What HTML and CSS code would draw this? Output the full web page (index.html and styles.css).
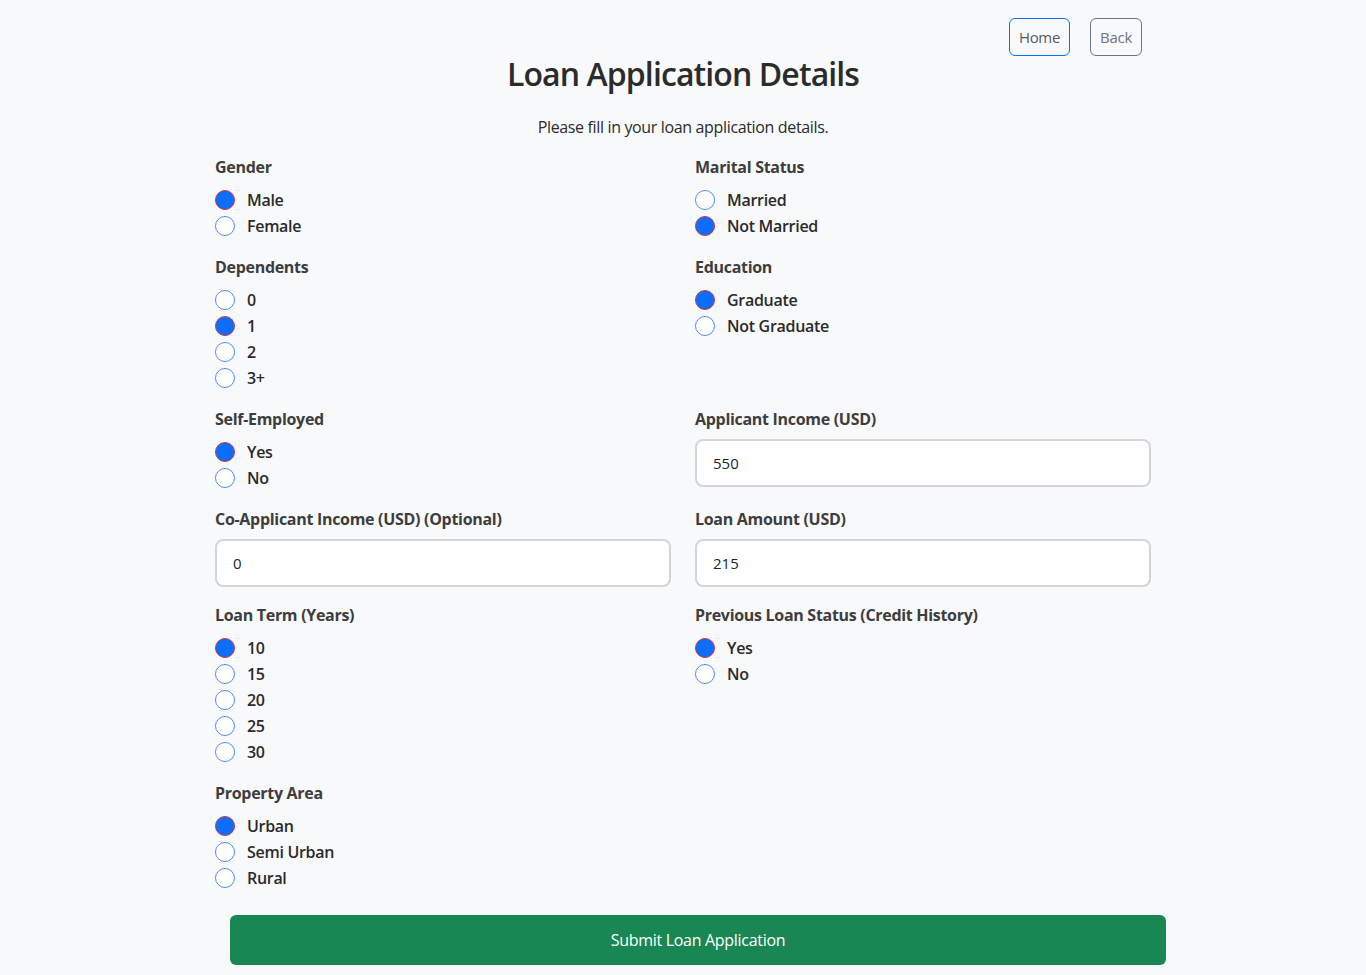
FILE: index.html
```html
<!DOCTYPE html>
<html lang="en">
<head>
<meta charset="utf-8">
<title>Loan Application Details</title>
<link rel="stylesheet" href="styles.css">
</head>
<body>
<div class="container">
  <header class="page-header">
    <nav class="top-nav">
      <a class="btn btn-home" href="#">Home</a>
      <a class="btn btn-back" href="#">Back</a>
    </nav>
    <h1 class="title">Loan Application Details</h1>
    <p class="subtitle">Please fill in your loan application details.</p>
  </header>

  <form class="loan-form">
    <div class="grid">
      <div class="field">
        <div class="field-label">Gender</div>
        <label class="check"><input type="radio" name="gender" checked><span>Male</span></label>
        <label class="check"><input type="radio" name="gender"><span>Female</span></label>
      </div>
      <div class="field">
        <div class="field-label">Marital Status</div>
        <label class="check"><input type="radio" name="married"><span>Married</span></label>
        <label class="check"><input type="radio" name="married" checked><span>Not Married</span></label>
      </div>

      <div class="field">
        <div class="field-label">Dependents</div>
        <label class="check"><input type="radio" name="dep"><span>0</span></label>
        <label class="check"><input type="radio" name="dep" checked><span>1</span></label>
        <label class="check"><input type="radio" name="dep"><span>2</span></label>
        <label class="check"><input type="radio" name="dep"><span>3+</span></label>
      </div>
      <div class="field">
        <div class="field-label">Education</div>
        <label class="check"><input type="radio" name="edu" checked><span>Graduate</span></label>
        <label class="check"><input type="radio" name="edu"><span>Not Graduate</span></label>
      </div>

      <div class="field">
        <div class="field-label">Self-Employed</div>
        <label class="check"><input type="radio" name="self" checked><span>Yes</span></label>
        <label class="check"><input type="radio" name="self"><span>No</span></label>
      </div>
      <div class="field">
        <label class="field-label" for="income">Applicant Income (USD)</label>
        <input class="text-input" id="income" type="text" value="550">
      </div>

      <div class="field">
        <label class="field-label" for="coincome">Co-Applicant Income (USD) (Optional)</label>
        <input class="text-input" id="coincome" type="text" value="0">
      </div>
      <div class="field">
        <label class="field-label" for="amount">Loan Amount (USD)</label>
        <input class="text-input" id="amount" type="text" value="215">
      </div>

      <div class="field">
        <div class="field-label">Loan Term (Years)</div>
        <label class="check"><input type="radio" name="term" checked><span>10</span></label>
        <label class="check"><input type="radio" name="term"><span>15</span></label>
        <label class="check"><input type="radio" name="term"><span>20</span></label>
        <label class="check"><input type="radio" name="term"><span>25</span></label>
        <label class="check"><input type="radio" name="term"><span>30</span></label>
      </div>
      <div class="field">
        <div class="field-label">Previous Loan Status (Credit History)</div>
        <label class="check"><input type="radio" name="credit" checked><span>Yes</span></label>
        <label class="check"><input type="radio" name="credit"><span>No</span></label>
      </div>

      <div class="field">
        <div class="field-label">Property Area</div>
        <label class="check"><input type="radio" name="area" checked><span>Urban</span></label>
        <label class="check"><input type="radio" name="area"><span>Semi Urban</span></label>
        <label class="check"><input type="radio" name="area"><span>Rural</span></label>
      </div>
    </div>

    <button class="submit" type="button">Submit Loan Application</button>
  </form>
</div>
</body>
</html>
```

FILE: styles.css
```css
* { box-sizing: border-box; }

html, body {
  margin: 0;
  padding: 0;
  background: #f8f9fa;
}

body {
  font-family: "Open Sans", "Noto Sans", "Liberation Sans", sans-serif;
  color: #212529;
  font-size: 16px;
  line-height: 24px;
  letter-spacing: -0.3px;
}

.container {
  max-width: 960px;
  margin: 0 auto;
  padding: 0 12px;
}

.page-header {
  position: relative;
  padding-top: 54px;
  text-align: center;
}

.top-nav {
  position: absolute;
  top: 18px;
  right: 9px;
  display: flex;
  gap: 20px;
}

.btn {
  display: inline-block;
  height: 38px;
  padding: 0 9px;
  line-height: 36px;
  font-size: 15px;
  border-radius: 6px;
  text-decoration: none;
  background: transparent;
  color: #555b61;
}

.btn-home { border: 1px solid #0d6efd; }
.btn-back { border: 1px solid #6c757d; color: #6c757d; }

.title {
  margin: 0;
  font-size: 32px;
  line-height: 40px;
  font-weight: 600;
  color: #2b2b2b;
  letter-spacing: -0.9px;
}

.subtitle {
  margin: 21px 0 0;
  font-size: 16px;
  line-height: 24px;
  color: #2b2b2b;
  letter-spacing: -0.35px;
}

.loan-form {
  margin-top: 16px;
}

.grid {
  display: grid;
  grid-template-columns: 1fr 1fr;
  column-gap: 24px;
}

.field {
  display: flex;
  flex-direction: column;
  align-items: flex-start;
  margin-bottom: 16px;
}

.field-label {
  display: block;
  font-weight: 700;
  font-size: 16px;
  line-height: 24px;
  color: #3d3d3d;
  margin-bottom: 8px;
}

.check {
  display: flex;
  align-items: center;
  gap: 12px;
  height: 24px;
  margin: 1px 0;
  font-size: 16px;
  font-weight: 600;
  color: #2a2a2a;
}

.check input {
  -webkit-appearance: none;
  appearance: none;
  margin: 0;
  width: 20px;
  height: 20px;
  border-radius: 50%;
  border: 1px solid #4a8ef5;
  background: #fff;
  flex: 0 0 20px;
}

.check input:checked {
  background: #0d6efd;
  border-color: #d0343a;
}

.text-input {
  display: block;
  width: 100%;
  height: 48px;
  padding: 0 16px;
  border: 2px solid #d2d6dc;
  border-radius: 8px;
  background: #fff;
  font-family: inherit;
  font-size: 15px;
  color: #212529;
  outline: none;
}

.submit {
  display: block;
  width: 936px;
  height: 50px;
  margin: 8px 0 10px 15px;
  border: 0;
  border-radius: 6px;
  background: #198754;
  color: #fff;
  font-family: inherit;
  font-size: 16px;
  letter-spacing: -0.3px;
}
```
